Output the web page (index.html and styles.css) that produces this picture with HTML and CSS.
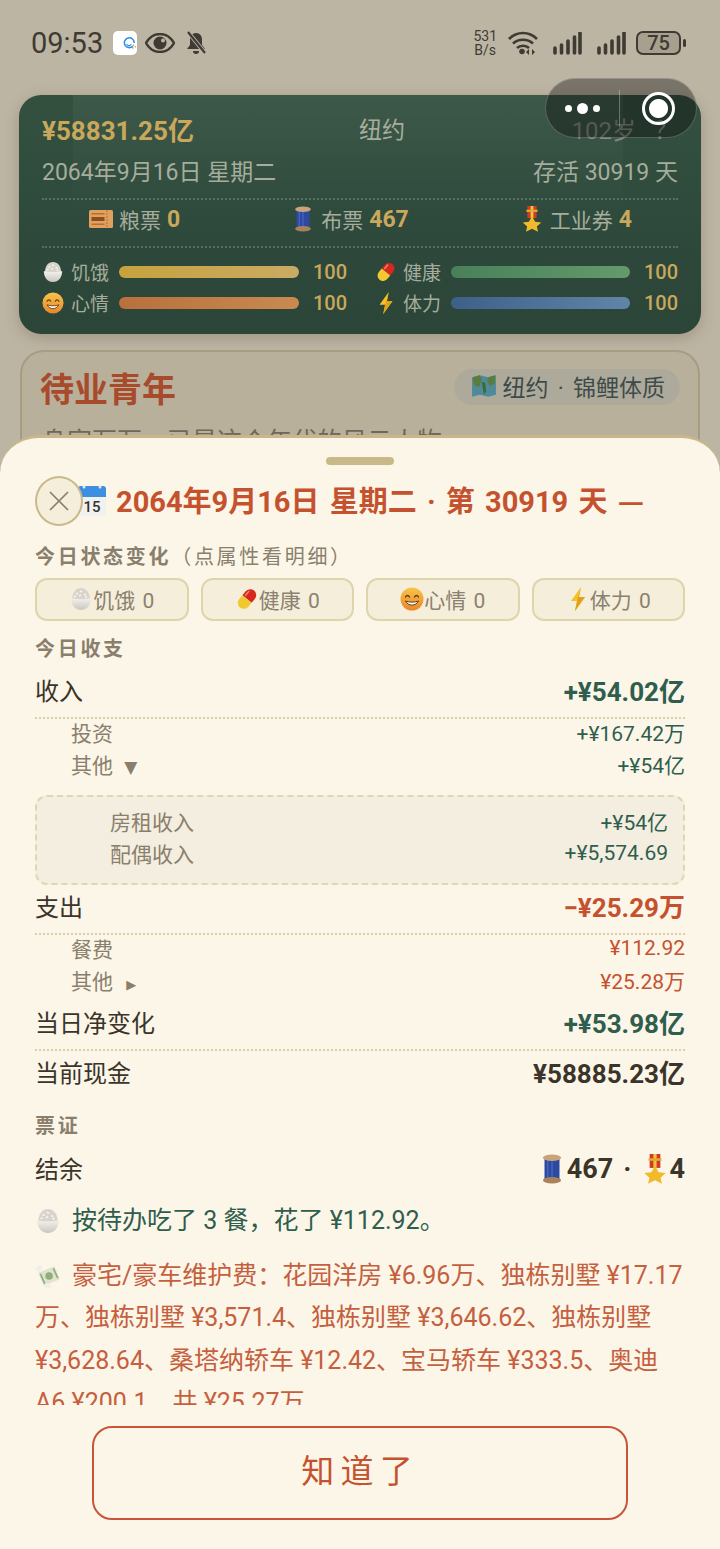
FILE: index.html
```html
<!DOCTYPE html>
<html lang="en">
<head>
  <meta charset="UTF-8" />
  <title>待业青年</title>
  <link rel="stylesheet" href="styles.css">
</head>
<body>
  <svg class="sprite" aria-hidden="true">
    <defs>
      <linearGradient id="gSmile" x1="0" y1="0" x2="0" y2="1"><stop offset="0" stop-color="#f7c64a"/><stop offset="1" stop-color="#e8862a"/></linearGradient>
      <linearGradient id="gRice" x1="0" y1="0" x2="0" y2="1"><stop offset="0" stop-color="#f4f2ec"/><stop offset="1" stop-color="#c9c7c0"/></linearGradient>
      <symbol id="i-rice" viewBox="0 0 24 24">
        <path d="M3 14C3 5 7 1 12 1s9 4 9 13z" fill="#d8d4cc"/>
        <path d="M7 7l2-1M11 4l2 1M15 7l2 1M10 9l2-1M5 10l2-1M16 10l2 0" stroke="#f6f4ee" stroke-width="1.500"/>
        <path d="M2 11c3 1.500 17 1.500 20 0 0 7-4 12-10 12S2 18 2 11z" fill="url(#gRice)"/>
      </symbol>
      <symbol id="i-pill" viewBox="0 0 24 24">
        <g transform="rotate(40 12 12)">
          <path d="M6 7a6 6 0 0 1 12 0v5H6z" fill="#d8281e"/>
          <path d="M6 12h12v5a6 6 0 0 1-12 0z" fill="#f2c832"/>
          <path d="M8.500 5v5" stroke="#f08a7a" stroke-width="1.400" stroke-linecap="round"/>
        </g>
      </symbol>
      <symbol id="i-smile" viewBox="0 0 24 24">
        <circle cx="12" cy="12" r="11.500" fill="url(#gSmile)"/>
        <path d="M5.500 10c1-2 3-2 4 0M14.500 10c1-2 3-2 4 0" fill="none" stroke="#6b3a12" stroke-width="1.400" stroke-linecap="round"/>
        <path d="M5.500 14c3 5.500 10 5.500 13 0-4 1.500-9 1.500-13 0z" fill="#fff" stroke="#6b3a12" stroke-width="1"/>
      </symbol>
      <symbol id="i-bolt" viewBox="0 0 24 24">
        <path d="M15 0L5 14h6l-2 10 10-14h-6z" fill="#f4c326"/>
        <path d="M15 0L11 14l-2 10 10-14h-6z" fill="#e3a01a"/>
      </symbol>
      <symbol id="i-ticket" viewBox="0 0 24 24">
        <rect x="0" y="3" width="24" height="18" rx="1.500" fill="#e0a060"/>
        <path d="M18 3v18" stroke="#b8702e" stroke-width="1" stroke-dasharray="2 1"/>
        <rect x="2.500" y="6" width="13" height="1.500" fill="#b8702e"/>
        <rect x="2.500" y="10" width="13" height="4" fill="#8a4f1f"/>
        <rect x="2.500" y="16.500" width="13" height="1.500" fill="#b8702e"/>
      </symbol>
      <symbol id="i-spool" viewBox="0 0 24 28">
        <rect x="5" y="3" width="14" height="22" fill="#2e4aa0"/>
        <path d="M8 4v20M12 4v20" stroke="#4766c4" stroke-width="1.300"/>
        <ellipse cx="12" cy="3.500" rx="8.500" ry="3" fill="#c9a47a"/>
        <ellipse cx="12" cy="24.500" rx="8.500" ry="3" fill="#a98258"/>
      </symbol>
      <symbol id="i-medal" viewBox="0 0 24 28">
        <path d="M7 0h10v13H7z" fill="#cf3b26"/>
        <path d="M10.500 0h3v13h-3z" fill="#f0c445"/>
        <rect x="6" y="4" width="12" height="2.400" fill="#e6a92c"/>
        <path d="M12 11l3.400 6 6.600.8-4.800 4.300 1.300 5.700-6.500-3.200-6.500 3.200 1.300-5.700L2 17.800l6.600-.8z" fill="#f2b92a"/>
      </symbol>
      <symbol id="i-calendar" viewBox="0 0 28 32">
        <rect x="0" y="1" width="28" height="30" rx="3" fill="#f1f1ef"/>
        <path d="M0 12V4a3 3 0 0 1 3-3h22a3 3 0 0 1 3 3v8z" fill="#3d8fe0"/>
        <circle cx="6" cy="2" r="1.500" fill="#e8e8e8"/>
        <circle cx="22" cy="2" r="1.500" fill="#e8e8e8"/>
        <text x="14" y="27" class="cal-num">15</text>
      </symbol>
      <symbol id="i-money" viewBox="0 0 24 24">
        <path d="M3 9l15-6 5 12-15 6z" fill="#dfe3cf"/>
        <circle cx="13" cy="12" r="3.500" fill="#8fae78"/>
        <path d="M5 10l4 9M17 5l4 9" stroke="#8fae78" stroke-width="1.500"/>
        <path d="M0 6c2-4 5-5 7-3L4 9zM8 21c2 2 5 3 8 1l-5-4z" fill="#efeee8"/>
      </symbol>
      <symbol id="i-map" viewBox="0 0 24 24">
        <path d="M1 4l7-2 8 2 7-2v18l-7 2-8-2-7 2z" fill="#4f8a9a"/>
        <path d="M2 4l6-2 2 4-2 6-3 1-3-4zM16 4l6-2v8l-5 2-2-5z" fill="#5a7d3c"/>
        <path d="M10 8l3 1 1 8-2 3-1-6z" fill="#3e6a2e"/>
      </symbol>
    </defs>
  </svg>

  <div class="page">
    <div class="statusbar">
      <div class="status-left">
        <span class="clock">09:53</span>
        <span class="app-tile">
          <svg width="20" height="20" viewBox="0 0 20 20"><path d="M14 14.500a7 7 0 1 1 2-4.500" fill="none" stroke="#2b8fe8" stroke-width="2.200"/><path d="M5 12c2 2 5 2 7 0" fill="none" stroke="#2b8fe8" stroke-width="1.600"/><circle cx="15" cy="13" r="1.300" fill="#e8a62b"/><circle cx="17.500" cy="15.500" r="1" fill="#e2543a"/><circle cx="14" cy="17" r="1" fill="#43b06a"/></svg>
        </span>
        <svg width="30" height="20" viewBox="0 0 30 20"><path d="M1 10C5 3 10 1 15 1s10 2 14 9c-4 7-9 9-14 9S5 17 1 10z" fill="none" stroke="#3f3a33" stroke-width="2.400"/><circle cx="15" cy="10" r="6.500" fill="#3f3a33"/><circle cx="18" cy="7.500" r="2" fill="#bdb5a3"/></svg>
        <svg width="22" height="24" viewBox="0 0 22 24"><path d="M11 2c4 0 6 3 6 7v5l3 4H2l3-4V9c0-4 2-7 6-7z" fill="#3f3a33"/><path d="M8 20h6a3 3 0 0 1-6 0z" fill="#3f3a33"/><path d="M3 1l17 21" stroke="#bdb5a3" stroke-width="4"/><path d="M3 1l17 21" stroke="#3f3a33" stroke-width="2.200"/></svg>
      </div>
      <div class="status-right">
        <span class="netspeed">531<br>B/s</span>
        <svg class="wifi" width="30" height="24" viewBox="0 0 30 24"><path d="M1 8c8-8 20-8 28 0M5 12.500c5.500-5 14.500-5 20 0M9 17c3-3 9-3 12 0" fill="none" stroke="#3f3a33" stroke-width="2.600"/><circle cx="14" cy="20.500" r="2.800" fill="#3f3a33"/><path d="M21 18l-3 3 3 3zM24 24l3-3-3-3z" fill="#3f3a33"/></svg>
        <svg class="signal" width="29" height="23" viewBox="0 0 29 23"><path d="M2 16v5M8.500 13v8M15 9v12M21.500 5v16M27 1v20" stroke="#3f3a33" stroke-width="3.600" stroke-linecap="round"/></svg>
        <svg class="signal" width="29" height="23" viewBox="0 0 29 23"><path d="M2 16v5M8.500 13v8M15 9v12M21.500 5v16M27 1v20" stroke="#3f3a33" stroke-width="3.600" stroke-linecap="round"/></svg>
        <span class="battery"><span class="battery-num">75</span></span>
      </div>
    </div>

    <section class="hero">
      <div class="hero-top">
        <span class="hero-money">¥58831.25亿</span>
        <span class="hero-city">纽约</span>
        <span class="hero-age">102岁 &nbsp;？</span>
      </div>
      <div class="hero-date">
        <span>2064年9月16日 星期二</span>
        <span>存活 30919 天</span>
      </div>
      <div class="tickets">
        <span class="ticket"><svg class="ico-ticket"><use href="#i-ticket"/></svg>粮票 <b>0</b></span>
        <span class="ticket"><svg class="ico-ticket"><use href="#i-spool"/></svg>布票 <b>467</b></span>
        <span class="ticket"><svg class="ico-ticket"><use href="#i-medal"/></svg>工业券 <b>4</b></span>
      </div>
      <div class="stats">
        <div class="stat"><svg class="ico-stat"><use href="#i-rice"/></svg><span class="stat-name">饥饿</span><span class="bar bar-hunger"></span><b>100</b></div>
        <div class="stat"><svg class="ico-stat"><use href="#i-pill"/></svg><span class="stat-name">健康</span><span class="bar bar-health"></span><b>100</b></div>
        <div class="stat"><svg class="ico-stat"><use href="#i-smile"/></svg><span class="stat-name">心情</span><span class="bar bar-mood"></span><b>100</b></div>
        <div class="stat"><svg class="ico-stat"><use href="#i-bolt"/></svg><span class="stat-name">体力</span><span class="bar bar-energy"></span><b>100</b></div>
      </div>
    </section>

    <section class="job">
      <div class="job-head">
        <h2>待业青年</h2>
        <span class="job-chip"><svg class="ico-chip"><use href="#i-map"/></svg>纽约 · 锦鲤体质</span>
      </div>
      <p class="job-desc">身家万万，已是这个年代的风云人物</p>
    </section>

    <div class="capsule">
      <span class="capsule-dots"><i></i><i class="big"></i><i></i></span>
      <span class="capsule-line"></span>
      <span class="capsule-ring"></span>
    </div>

    <div class="sheet">
      <div class="handle"></div>
      <div class="detail">
        <div class="detail-head">
          <button class="close">
            <svg width="22" height="22" viewBox="0 0 22 22"><path d="M2 2l18 18M20 2L2 20" stroke="#8a7f6c" stroke-width="1.700"/></svg>
          </button>
          <svg class="ico-cal"><use href="#i-calendar"/></svg>
          <h3>2064年9月16日 星期二 · 第 30919 天 <span class="dash">—</span></h3>
        </div>

        <div class="label label-state">今日状态变化<span>（点属性看明细）</span></div>
        <div class="chips">
          <button class="chip"><svg class="ico-pill"><use href="#i-rice"/></svg>饥饿 0</button>
          <button class="chip"><svg class="ico-pill"><use href="#i-pill"/></svg>健康 0</button>
          <button class="chip"><svg class="ico-pill"><use href="#i-smile"/></svg>心情 0</button>
          <button class="chip"><svg class="ico-pill"><use href="#i-bolt"/></svg>体力 0</button>
        </div>

        <div class="label label-money">今日收支</div>
        <div class="row-main mt-income"><span>收入</span><b class="plus">+¥54.02亿</b></div>
        <div class="row-sub plus"><span>投资</span><span>+¥167.42万</span></div>
        <div class="row-sub plus"><span>其他 <em class="arrow-open">▼</em></span><span>+¥54亿</span></div>
        <div class="breakdown plus">
          <div class="row-sub"><span>房租收入</span><span>+¥54亿</span></div>
          <div class="row-sub"><span>配偶收入</span><span>+¥5,574.69</span></div>
        </div>
        <div class="row-main mt-spend"><span>支出</span><b class="minus">−¥25.29万</b></div>
        <div class="row-sub minus"><span>餐费</span><span>¥112.92</span></div>
        <div class="row-sub minus"><span>其他 <em class="arrow-closed">▶</em></span><span>¥25.28万</span></div>
        <div class="row-main mt-net"><span>当日净变化</span><b class="plus">+¥53.98亿</b></div>
        <div class="row-main row-plain mt-cash"><span>当前现金</span><b class="dark">¥58885.23亿</b></div>

        <div class="label label-coupon">票证</div>
        <div class="row-main row-plain mt-left">
          <span>结余</span>
          <b class="dark coupons"><svg class="ico-coupon"><use href="#i-spool"/></svg>467<i>·</i><svg class="ico-coupon"><use href="#i-medal"/></svg>4</b>
        </div>

        <p class="note note-food"><svg class="ico-note"><use href="#i-rice"/></svg>按待办吃了 3 餐，花了 ¥112.92。</p>
        <p class="note note-cost"><svg class="ico-note"><use href="#i-money"/></svg>豪宅/豪车维护费：花园洋房 ¥6.96万、独栋别墅 ¥17.17万、独栋别墅 ¥3,571.4、独栋别墅 ¥3,646.62、独栋别墅 ¥3,628.64、桑塔纳轿车 ¥12.42、宝马轿车 ¥333.5、奥迪 A6 ¥200.1，共 ¥25.27万。</p>
      </div>
      <button class="confirm">知 道 了</button>
    </div>
  </div>
</body>
</html>
```

FILE: styles.css
```css
* {
  box-sizing: border-box;
}
body {
  margin: 0;
  font-family: Roboto, "Noto Sans CJK SC", sans-serif;
}
.sprite {
  position: absolute;
  width: 0;
  height: 0;
}
.cal-num {
  font-size: 15px;
  font-weight: 500;
  text-anchor: middle;
  fill: #333;
}
.page {
  position: relative;
  height: 1549px;
  overflow: hidden;
  background: #bdb5a3;
}

/* status bar */
.statusbar {
  display: flex;
  justify-content: space-between;
  align-items: center;
  height: 86px;
  padding: 0 34px 0 31px;
  color: #3f3a33;
}
.status-left, .status-right {
  display: flex;
  align-items: center;
}
.clock {
  font-size: 29px;
  width: 82px;
}
.app-tile {
  display: flex;
  align-items: center;
  justify-content: center;
  width: 24px;
  height: 24px;
  margin-right: 8px;
  background: #fff;
  border-radius: 5px;
}
.status-left svg:last-child {
  margin-left: 10px;
}
.netspeed {
  font-size: 14px;
  line-height: 14px;
  text-align: center;
  margin-right: 11px;
}
.wifi {
  margin-right: 15px;
}
.signal {
  margin-right: 15px;
}
.signal + .signal {
  margin-right: 10px;
}
.battery {
  position: relative;
  display: flex;
  align-items: center;
  justify-content: center;
  width: 45px;
  height: 24px;
  border: 2px solid #3f3a33;
  border-radius: 7px;
  background: #a8a08e;
  margin-right: 5px;
}
.battery::after {
  content: "";
  position: absolute;
  right: -7px;
  top: 6px;
  width: 3px;
  height: 8px;
  border-radius: 2px;
  background: #3f3a33;
}
.battery-num {
  font-size: 20px;
  font-weight: 500;
}

/* top card */
.hero {
  height: 239px;
  margin: 9px 19px 0;
  padding: 19px 23px 0;
  border-radius: 22px;
  color: #a6ad9c;
  background:
    linear-gradient(180deg, rgba(255, 255, 255, 0.05), rgba(255, 255, 255, 0)) 54px 0 / 550px 120px no-repeat,
    linear-gradient(180deg, #33503f 0%, #2f4b3d 45%, #2b4538 100%);
  box-shadow: 0 4px 14px rgba(70, 60, 40, 0.25);
}
.hero-top {
  position: relative;
  display: flex;
  justify-content: space-between;
  align-items: center;
  height: 32px;
  padding-bottom: 4px;
}
.hero-money {
  font-size: 26px;
  font-weight: 700;
  color: #c9a85c;
}
.hero-city {
  position: absolute;
  left: 317px;
  font-size: 23px;
}
.hero-age {
  font-size: 24px;
  word-spacing: 3px;
  color: #848b80;
}
.hero-date {
  display: flex;
  justify-content: space-between;
  align-items: center;
  height: 32px;
  margin-top: 10px;
  padding-bottom: 4px;
  font-size: 23px;
}
.tickets {
  display: flex;
  justify-content: space-between;
  align-items: center;
  height: 50px;
  margin-top: 10px;
  padding: 0 46px 8px 47px;
  border-top: 2px dotted #55705f;
  border-bottom: 2px dotted #55705f;
  font-size: 21px;
}
.ticket {
  display: flex;
  align-items: center;
  gap: 6px;
}
.ticket b {
  font-size: 23px;
  color: #c9a85c;
}
.ico-ticket {
  width: 24px;
  height: 26px;
}
.stats {
  display: grid;
  grid-template-columns: 305px 303px;
  column-gap: 28px;
  margin-top: 8px;
}
.stat {
  display: flex;
  align-items: center;
  height: 31px;
  font-size: 19px;
}
.stat b {
  width: 34px;
  margin-left: 14px;
  font-size: 20px;
  font-weight: 500;
  color: #c9a85c;
}
.ico-stat {
  width: 22px;
  height: 22px;
  margin-right: 6px;
  flex: none;
}
.stat:nth-child(odd) .ico-stat {
  margin-right: 7px;
}
.stat-name {
  flex: none;
  margin-right: 10px;
}
.bar {
  flex: 1;
  height: 12px;
  border-radius: 6px;
}
.bar-hunger {
  background: linear-gradient(90deg, #c7a23e, #c9ab62);
}
.bar-health {
  background: linear-gradient(90deg, #4a8058, #649a6c);
}
.bar-mood {
  background: linear-gradient(90deg, #b9703c, #c98a50);
}
.bar-energy {
  background: linear-gradient(90deg, #3d6088, #5f86a8);
}

/* card under the sheet */
.job {
  height: 140px;
  margin: 16px 20px 0;
  padding: 14px 18px;
  border: 2px solid #a89c80;
  border-radius: 24px;
  background: #b9b09b;
}
.job-head {
  display: flex;
  justify-content: space-between;
  align-items: center;
  height: 42px;
}
.job h2 {
  margin: 0;
  font-size: 34px;
  font-weight: 700;
  color: #a84a2c;
}
.job-chip {
  display: flex;
  align-items: center;
  gap: 6px;
  height: 36px;
  padding: 0 15px 3px 17px;
  border-radius: 18px;
  font-size: 23px;
  word-spacing: 3.5px;
  color: #3f4a4a;
  background: #aeaa9b;
}
.ico-chip {
  width: 26px;
  height: 26px;
}
.job-desc {
  margin: 13px 0 0 2px;
  font-size: 25px;
  color: #6f685a;
}

/* mini program capsule */
.capsule {
  position: absolute;
  top: 78px;
  left: 545px;
  display: flex;
  align-items: center;
  width: 152px;
  height: 60px;
  border: 1px solid rgba(255, 255, 255, 0.22);
  border-radius: 30px;
  background: rgba(10, 10, 10, 0.38);
}
.capsule-dots {
  display: flex;
  align-items: center;
  justify-content: center;
  gap: 5px;
  width: 73px;
}
.capsule-dots i {
  width: 7px;
  height: 7px;
  border-radius: 50%;
  background: #fff;
}
.capsule-dots i.big {
  width: 11px;
  height: 11px;
}
.capsule-line {
  width: 1px;
  height: 37px;
  background: rgba(255, 255, 255, 0.3);
}
.capsule-ring {
  width: 33px;
  height: 33px;
  margin-left: 22px;
  border: 3px solid #fff;
  border-radius: 50%;
  background: radial-gradient(circle, #fff 0 9px, transparent 10px);
}

/* bottom sheet */
.sheet {
  position: absolute;
  top: 435px;
  left: 0;
  right: 0;
  bottom: 0;
  border-top: 3px solid #c9b68a;
  border-radius: 38px 38px 0 0;
  background: #fcf6e8;
}
.handle {
  width: 68px;
  height: 8px;
  margin: 19px auto 0;
  border-radius: 4px;
  background: #c9b98a;
}
.detail {
  height: 929px;
  margin-top: 11px;
  padding: 0 35px;
  overflow: hidden;
  color: #3a342a;
}
.detail-head {
  display: flex;
  align-items: center;
  height: 50px;
}
.close {
  position: relative;
  z-index: 1;
  display: flex;
  align-items: center;
  justify-content: center;
  width: 48px;
  height: 50px;
  padding: 0;
  border: 2px solid #c9b98a;
  border-radius: 50%;
  background: #f5eeda;
  flex: none;
}
.ico-cal {
  width: 28px;
  height: 32px;
  margin-left: -5px;
  flex: none;
}
.detail-head h3 {
  margin: 0 0 4px 10px;
  font-size: 29px;
  font-weight: 700;
  word-spacing: 3px;
  white-space: nowrap;
  color: #c5522f;
}
.dash {
  font-family: "Noto Sans CJK SC", sans-serif;
}
.label {
  height: 28px;
  line-height: 28px;
  font-size: 20px;
  font-weight: 700;
  letter-spacing: 2.7px;
  color: #8a7f6c;
}
.label span {
  font-weight: 400;
}
.label-state {
  margin-top: 17px;
}
.label-money {
  margin-top: 14px;
}
.label-coupon {
  margin-top: 21px;
}
.chips {
  display: grid;
  grid-template-columns: repeat(4, 1fr);
  column-gap: 12px;
  margin-top: 7px;
}
.chip {
  display: flex;
  align-items: center;
  justify-content: center;
  height: 43px;
  padding: 0 0 2px;
  border: 2px solid #e0d4ac;
  border-radius: 12px;
  font: inherit;
  font-size: 21px;
  word-spacing: 2px;
  color: #8a8170;
  background: #f5eeda;
}
.ico-pill {
  width: 24px;
  height: 24px;
}
.row-main {
  display: flex;
  justify-content: space-between;
  align-items: center;
  height: 45px;
  padding-bottom: 12px;
  border-bottom: 2px dotted #d9cfa9;
  font-size: 24px;
}
.row-main b {
  font-size: 26px;
  font-weight: 700;
}
.row-plain {
  height: 36px;
  padding-bottom: 4px;
  border-bottom: 0;
}
.mt-income {
  margin-top: 11px;
}
.mt-spend {
  margin-top: 5px;
}
.mt-net {
  margin-top: 7px;
}
.mt-cash {
  margin-top: 4px;
}
.mt-left {
  margin-top: 11px;
}
.plus {
  color: #2f5d4e;
}
.minus {
  color: #c5522f;
}
.row-main b.dark {
  color: #3a342a;
}
.row-sub {
  display: flex;
  justify-content: space-between;
  align-items: center;
  height: 32px;
  padding: 0 0 6px 36px;
  font-size: 21px;
}
.row-sub span:first-child {
  color: #8a7f6c;
}
.arrow-open, .arrow-closed {
  margin-left: 6px;
  font-style: normal;
  font-size: 17px;
  font-family: "DejaVu Sans", sans-serif;
}
.arrow-closed {
  margin-left: 8px;
  font-size: 13px;
}
.breakdown {
  height: 90px;
  margin-top: 12px;
  padding: 11px 15px 0 37px;
  border: 2px dashed #e0d6b4;
  border-radius: 12px;
  background: #f3eee0;
}
.coupons {
  display: flex;
  align-items: center;
  padding-top: 3px;
}
.row-main .coupons {
  font-size: 27px;
}
.coupons i {
  margin: 0 10px;
  font-style: normal;
}
.ico-coupon {
  width: 26px;
  height: 30px;
  margin-right: 2px;
}
.note {
  margin: 12px 0 0;
  font-size: 25px;
  line-height: 42.5px;
}
.note-food {
  margin-top: 13px;
  color: #2f5d4e;
}
.note-cost {
  color: #c5603f;
}
.ico-note {
  width: 26px;
  height: 28px;
  margin-right: 11px;
  vertical-align: -6px;
}
.confirm {
  display: block;
  width: 536px;
  height: 94px;
  margin: 21px auto 0;
  padding: 0 6px 8px 0;
  border: 2px solid #c8553a;
  border-radius: 20px;
  font: inherit;
  font-size: 33px;
  word-spacing: -2px;
  color: #c5522f;
  background: transparent;
}
```
